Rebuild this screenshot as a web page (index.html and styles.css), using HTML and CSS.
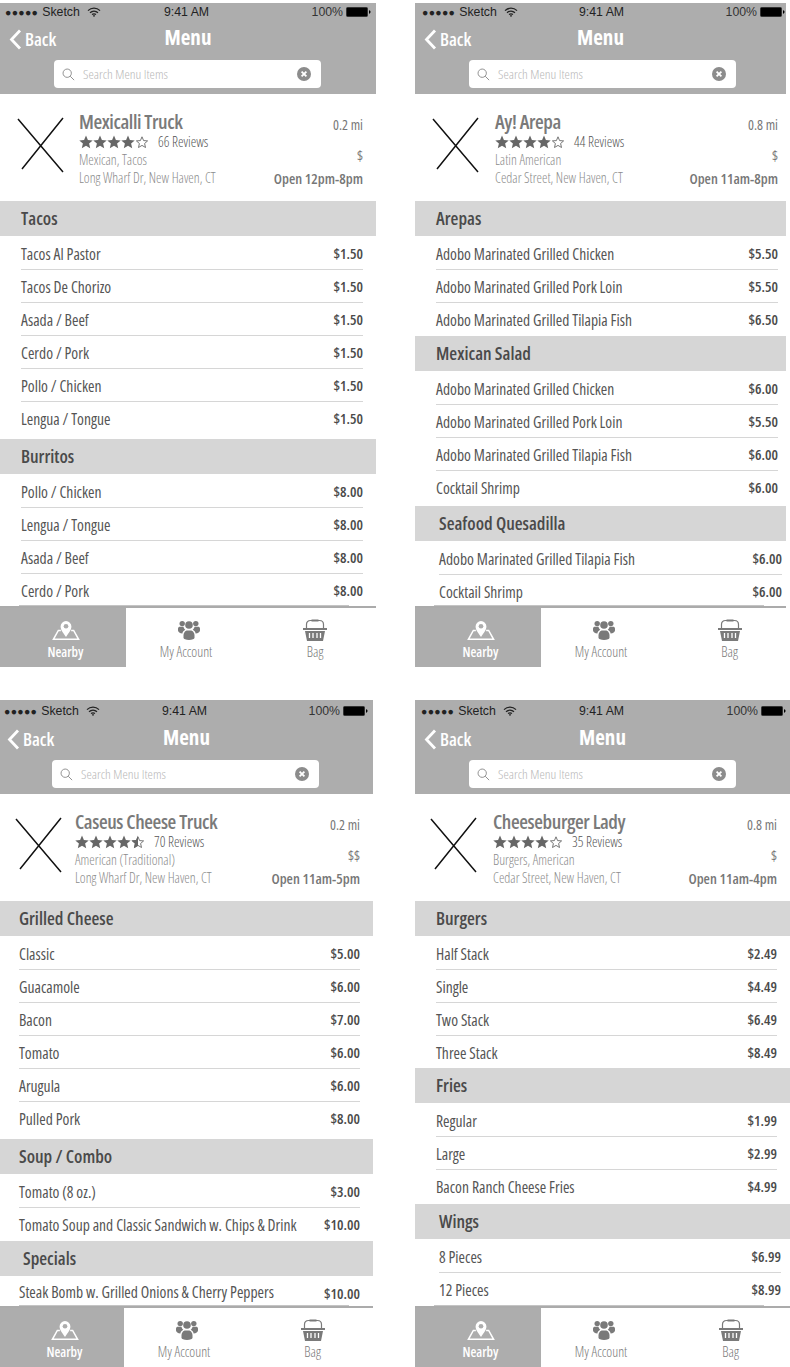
FILE: index.html
```html
<!DOCTYPE html>
<html lang="en">
<head>
    <meta charset="UTF-8">
    <meta name="viewport" content="width=device-width, initial-scale=1.0">
    <title>Menu wireframes</title>
    <link rel="stylesheet" href="styles.css">
</head>
<body>
    <svg class="icon-defs" width="0" height="0" aria-hidden="true">
        <symbol id="i-wifi" viewBox="0 0 14 10">
            <path d="M1 3.6C4.4.4 9.6.4 13 3.6M3 5.7c2.3-2 5.7-2 8 0M5 7.6c1.200-.9 2.800-.9 4 0" fill="none" stroke="currentColor" stroke-width="1.300"/>
            <path d="M7 10 5.800 8.700c.7-.5 1.700-.5 2.400 0z" fill="currentColor"/>
        </symbol>
        <symbol id="i-battery" viewBox="0 0 25 10">
            <rect x=".5" y=".5" width="21" height="9" rx="1" fill="#000" stroke="#333"/>
            <path d="M23 3.300c1 .2 1.500.8 1.500 1.700s-.5 1.500-1.500 1.700z" fill="#000"/>
        </symbol>
        <symbol id="i-back" viewBox="0 0 13 21">
            <path d="M11 1.500 2.500 10.500l8.500 9" fill="none" stroke="currentColor" stroke-width="2.800"/>
        </symbol>
        <symbol id="i-search" viewBox="0 0 15 15">
            <circle cx="6" cy="6" r="4.800" fill="none" stroke="currentColor" stroke-width="1.100"/>
            <path d="m9.500 9.500 4.500 4.500" stroke="currentColor" stroke-width="1.100"/>
        </symbol>
        <symbol id="i-clear" viewBox="0 0 14 14">
            <circle cx="7" cy="7" r="7" fill="#8c8c8c"/>
            <path d="m4.600 4.600 4.800 4.800m0-4.800-4.800 4.800" stroke="#fff" stroke-width="1.800"/>
        </symbol>
        <symbol id="i-cross" viewBox="0 0 48 56">
            <path d="M1 2 46 55M46 1 5 52" fill="none" stroke="#111" stroke-width="1.500"/>
        </symbol>
        <symbol id="i-star" viewBox="0 0 14 14">
            <path d="m7 .6 1.900 4.500 4.800.4-3.600 3.100 1.100 4.700L7 10.800l-4.200 2.500 1.100-4.700L.3 5.500l4.800-.4z" fill="#666"/>
        </symbol>
        <symbol id="i-star-empty" viewBox="0 0 14 14">
            <path d="m7 1.800 1.600 3.800 4 .3-3 2.600.9 4L7 10.400l-3.500 2.100.9-4-3-2.600 4-.3z" fill="none" stroke="#666" stroke-width=".9"/>
        </symbol>
        <symbol id="i-star-half" viewBox="0 0 14 14">
            <path d="m7 1.800 1.600 3.800 4 .3-3 2.600.9 4L7 10.400l-3.500 2.100.9-4-3-2.600 4-.3z" fill="none" stroke="#666" stroke-width=".9"/>
            <path d="m7 .6v10.200l-4.200 2.500 1.100-4.700L.3 5.500l4.800-.4z" fill="#666"/>
        </symbol>
        <symbol id="i-nearby" viewBox="0 0 30 23">
            <path d="M9.500 12H6.800L1.500 21.500h27L23.200 12h-2.700" fill="none" stroke="currentColor" stroke-width="1.600"/>
            <path d="M15 19c-3-4.500-5.800-7.700-5.800-11.300a5.800 5.800 0 0 1 11.600 0C20.800 11.300 18 14.500 15 19z" fill="currentColor"/>
            <circle cx="15" cy="7.500" r="2.500" fill="#adadad"/>
        </symbol>
        <symbol id="i-account" viewBox="0 0 22 20">
            <circle cx="4.200" cy="3.600" r="2.700"/>
            <circle cx="17.800" cy="3.600" r="2.700"/>
            <circle cx="11" cy="5" r="3.800"/>
            <path d="M0 8.800c0-1.500 1-2 2-2h3.500c.3 1.400 1 2.400 1.800 3-1.600.8-2.700 2-2.900 3.700C2 13.500 0 12 0 10.500zM22 8.800c0-1.500-1-2-2-2h-3.500c-.3 1.400-1 2.400-1.800 3 1.600.8 2.700 2 2.900 3.700 2.400 0 4.400-1.500 4.400-3z"/>
            <path d="M5.500 15.500c0-2.800 1.800-5 3.700-5h3.600c1.900 0 3.700 2.200 3.700 5v2.300c0 1.300-2.400 2.200-5.500 2.200s-5.500-.9-5.500-2.200z"/>
        </symbol>
        <symbol id="i-bag" viewBox="0 0 24 22">
            <path d="M3.500 9V5.500C3.500 3 5 1.500 7.500 1.500h9c2.500 0 4 1.500 4 4V9" fill="none" stroke="currentColor" stroke-width="1.200"/>
            <rect x="8.500" y=".5" width="7" height="2" fill="currentColor"/>
            <path d="M0 9h24v2H0zM2 12h20l-2 10H4z" fill="currentColor"/>
            <path d="M6.500 14v5M10 14v5M14 14v5M17.500 14v5" stroke="#fff" stroke-width="1.300"/>
        </symbol>
    </svg>

    <main class="board">
        <section class="phone phone-a">
            <header class="top">
                <div class="status">
                    <span class="status-left"><span class="signal">●●●●●</span> Sketch <svg class="wifi"><use href="#i-wifi"/></svg></span>
                    <span class="status-time">9:41 AM</span>
                    <span class="status-right">100% <svg class="battery"><use href="#i-battery"/></svg></span>
                </div>
                <div class="nav">
                    <a class="back"><svg class="back-icon"><use href="#i-back"/></svg>Back</a>
                    <h1 class="nav-title">Menu</h1>
                </div>
                <div class="search">
                    <svg class="search-icon"><use href="#i-search"/></svg>
                    <span class="search-text">Search Menu Items</span>
                    <svg class="clear-icon"><use href="#i-clear"/></svg>
                </div>
            </header>
            <div class="venue">
                <svg class="thumb"><use href="#i-cross"/></svg>
                <div class="venue-info">
                    <h2 class="venue-name">Mexicalli Truck</h2>
                    <div class="rating">
                        <span class="stars"><svg><use href="#i-star"/></svg><svg><use href="#i-star"/></svg><svg><use href="#i-star"/></svg><svg><use href="#i-star"/></svg><svg><use href="#i-star-empty"/></svg></span>
                        <span>66 Reviews</span>
                    </div>
                    <p class="venue-line">Mexican, Tacos</p>
                    <p class="venue-line">Long Wharf Dr, New Haven, CT</p>
                </div>
                <div class="venue-side">
                    <span>0.2 mi</span>
                    <span>$</span>
                    <strong>Open 12pm-8pm</strong>
                </div>
            </div>
            <div class="menu">
                <h3 class="band">Tacos</h3>
                <ul class="rows">
                    <li class="row"><span>Tacos Al Pastor</span><b>$1.50</b></li>
                    <li class="row"><span>Tacos De Chorizo</span><b>$1.50</b></li>
                    <li class="row"><span>Asada / Beef</span><b>$1.50</b></li>
                    <li class="row"><span>Cerdo / Pork</span><b>$1.50</b></li>
                    <li class="row"><span>Pollo / Chicken</span><b>$1.50</b></li>
                    <li class="row"><span>Lengua / Tongue</span><b>$1.50</b></li>
                </ul>
                <h3 class="band gap-5">Burritos</h3>
                <ul class="rows">
                    <li class="row"><span>Pollo / Chicken</span><b>$8.00</b></li>
                    <li class="row"><span>Lengua / Tongue</span><b>$8.00</b></li>
                    <li class="row"><span>Asada / Beef</span><b>$8.00</b></li>
                    <li class="row"><span>Cerdo / Pork</span><b>$8.00</b></li>
                </ul>
            </div>
            <nav class="tabs">
                <a class="tab tab-active"><svg class="tab-icon nearby"><use href="#i-nearby"/></svg>Nearby</a>
                <a class="tab"><svg class="tab-icon account"><use href="#i-account"/></svg>My Account</a>
                <a class="tab tab-bag"><svg class="tab-icon bag"><use href="#i-bag"/></svg>Bag</a>
            </nav>
        </section>

        <section class="phone phone-b">
            <header class="top">
                <div class="status">
                    <span class="status-left"><span class="signal">●●●●●</span> Sketch <svg class="wifi"><use href="#i-wifi"/></svg></span>
                    <span class="status-time">9:41 AM</span>
                    <span class="status-right">100% <svg class="battery"><use href="#i-battery"/></svg></span>
                </div>
                <div class="nav">
                    <a class="back"><svg class="back-icon"><use href="#i-back"/></svg>Back</a>
                    <h1 class="nav-title">Menu</h1>
                </div>
                <div class="search">
                    <svg class="search-icon"><use href="#i-search"/></svg>
                    <span class="search-text">Search Menu Items</span>
                    <svg class="clear-icon"><use href="#i-clear"/></svg>
                </div>
            </header>
            <div class="venue">
                <svg class="thumb"><use href="#i-cross"/></svg>
                <div class="venue-info">
                    <h2 class="venue-name">Ay! Arepa</h2>
                    <div class="rating">
                        <span class="stars"><svg><use href="#i-star"/></svg><svg><use href="#i-star"/></svg><svg><use href="#i-star"/></svg><svg><use href="#i-star"/></svg><svg><use href="#i-star-empty"/></svg></span>
                        <span>44 Reviews</span>
                    </div>
                    <p class="venue-line">Latin American</p>
                    <p class="venue-line">Cedar Street, New Haven, CT</p>
                </div>
                <div class="venue-side">
                    <span>0.8 mi</span>
                    <span>$</span>
                    <strong>Open 11am-8pm</strong>
                </div>
            </div>
            <div class="menu">
                <h3 class="band">Arepas</h3>
                <ul class="rows">
                    <li class="row"><span>Adobo Marinated Grilled Chicken</span><b>$5.50</b></li>
                    <li class="row"><span>Adobo Marinated Grilled Pork Loin</span><b>$5.50</b></li>
                    <li class="row"><span>Adobo Marinated Grilled Tilapia Fish</span><b>$6.50</b></li>
                </ul>
                <h3 class="band gap-1">Mexican Salad</h3>
                <ul class="rows">
                    <li class="row"><span>Adobo Marinated Grilled Chicken</span><b>$6.00</b></li>
                    <li class="row"><span>Adobo Marinated Grilled Pork Loin</span><b>$5.50</b></li>
                    <li class="row"><span>Adobo Marinated Grilled Tilapia Fish</span><b>$6.00</b></li>
                    <li class="row"><span>Cocktail Shrimp</span><b>$6.00</b></li>
                </ul>
                <div class="shifted">
                    <h3 class="band gap-3">Seafood Quesadilla</h3>
                    <ul class="rows">
                        <li class="row"><span>Adobo Marinated Grilled Tilapia Fish</span><b>$6.00</b></li>
                        <li class="row"><span>Cocktail Shrimp</span><b>$6.00</b></li>
                    </ul>
                </div>
            </div>
            <nav class="tabs">
                <a class="tab tab-active"><svg class="tab-icon nearby"><use href="#i-nearby"/></svg>Nearby</a>
                <a class="tab"><svg class="tab-icon account"><use href="#i-account"/></svg>My Account</a>
                <a class="tab tab-bag"><svg class="tab-icon bag"><use href="#i-bag"/></svg>Bag</a>
            </nav>
        </section>

        <section class="phone phone-c">
            <header class="top">
                <div class="status">
                    <span class="status-left"><span class="signal">●●●●●</span> Sketch <svg class="wifi"><use href="#i-wifi"/></svg></span>
                    <span class="status-time">9:41 AM</span>
                    <span class="status-right">100% <svg class="battery"><use href="#i-battery"/></svg></span>
                </div>
                <div class="nav">
                    <a class="back"><svg class="back-icon"><use href="#i-back"/></svg>Back</a>
                    <h1 class="nav-title">Menu</h1>
                </div>
                <div class="search">
                    <svg class="search-icon"><use href="#i-search"/></svg>
                    <span class="search-text">Search Menu Items</span>
                    <svg class="clear-icon"><use href="#i-clear"/></svg>
                </div>
            </header>
            <div class="venue">
                <svg class="thumb"><use href="#i-cross"/></svg>
                <div class="venue-info">
                    <h2 class="venue-name">Caseus Cheese Truck</h2>
                    <div class="rating">
                        <span class="stars"><svg><use href="#i-star"/></svg><svg><use href="#i-star"/></svg><svg><use href="#i-star"/></svg><svg><use href="#i-star"/></svg><svg><use href="#i-star-half"/></svg></span>
                        <span>70 Reviews</span>
                    </div>
                    <p class="venue-line">American (Traditional)</p>
                    <p class="venue-line">Long Wharf Dr, New Haven, CT</p>
                </div>
                <div class="venue-side">
                    <span>0.2 mi</span>
                    <span>$$</span>
                    <strong>Open 11am-5pm</strong>
                </div>
            </div>
            <div class="menu">
                <h3 class="band">Grilled Cheese</h3>
                <ul class="rows">
                    <li class="row"><span>Classic</span><b>$5.00</b></li>
                    <li class="row"><span>Guacamole</span><b>$6.00</b></li>
                    <li class="row"><span>Bacon</span><b>$7.00</b></li>
                    <li class="row"><span>Tomato</span><b>$6.00</b></li>
                    <li class="row"><span>Arugula</span><b>$6.00</b></li>
                    <li class="row"><span>Pulled Pork</span><b>$8.00</b></li>
                </ul>
                <h3 class="band gap-5">Soup / Combo</h3>
                <ul class="rows">
                    <li class="row"><span>Tomato (8 oz.)</span><b>$3.00</b></li>
                    <li class="row"><span>Tomato Soup and Classic Sandwich w. Chips &amp; Drink</span><b>$10.00</b></li>
                </ul>
                <h3 class="band gap-1 band-indent">Specials</h3>
                <ul class="rows">
                    <li class="row row-raised"><span>Steak Bomb w. Grilled Onions &amp; Cherry Peppers</span><b>$10.00</b></li>
                </ul>
            </div>
            <nav class="tabs">
                <a class="tab tab-active"><svg class="tab-icon nearby"><use href="#i-nearby"/></svg>Nearby</a>
                <a class="tab"><svg class="tab-icon account"><use href="#i-account"/></svg>My Account</a>
                <a class="tab tab-bag"><svg class="tab-icon bag"><use href="#i-bag"/></svg>Bag</a>
            </nav>
        </section>

        <section class="phone phone-d">
            <header class="top">
                <div class="status">
                    <span class="status-left"><span class="signal">●●●●●</span> Sketch <svg class="wifi"><use href="#i-wifi"/></svg></span>
                    <span class="status-time">9:41 AM</span>
                    <span class="status-right">100% <svg class="battery"><use href="#i-battery"/></svg></span>
                </div>
                <div class="nav">
                    <a class="back"><svg class="back-icon"><use href="#i-back"/></svg>Back</a>
                    <h1 class="nav-title">Menu</h1>
                </div>
                <div class="search">
                    <svg class="search-icon"><use href="#i-search"/></svg>
                    <span class="search-text">Search Menu Items</span>
                    <svg class="clear-icon"><use href="#i-clear"/></svg>
                </div>
            </header>
            <div class="venue">
                <svg class="thumb"><use href="#i-cross"/></svg>
                <div class="venue-info">
                    <h2 class="venue-name">Cheeseburger Lady</h2>
                    <div class="rating">
                        <span class="stars"><svg><use href="#i-star"/></svg><svg><use href="#i-star"/></svg><svg><use href="#i-star"/></svg><svg><use href="#i-star"/></svg><svg><use href="#i-star-empty"/></svg></span>
                        <span>35 Reviews</span>
                    </div>
                    <p class="venue-line">Burgers, American</p>
                    <p class="venue-line">Cedar Street, New Haven, CT</p>
                </div>
                <div class="venue-side">
                    <span>0.8 mi</span>
                    <span>$</span>
                    <strong>Open 11am-4pm</strong>
                </div>
            </div>
            <div class="menu">
                <h3 class="band">Burgers</h3>
                <ul class="rows">
                    <li class="row"><span>Half Stack</span><b>$2.49</b></li>
                    <li class="row"><span>Single</span><b>$4.49</b></li>
                    <li class="row"><span>Two Stack</span><b>$6.49</b></li>
                    <li class="row"><span>Three Stack</span><b>$8.49</b></li>
                </ul>
                <h3 class="band">Fries</h3>
                <ul class="rows">
                    <li class="row"><span>Regular</span><b>$1.99</b></li>
                    <li class="row"><span>Large</span><b>$2.99</b></li>
                    <li class="row"><span>Bacon Ranch Cheese Fries</span><b>$4.99</b></li>
                </ul>
                <div class="shifted">
                    <h3 class="band gap-2">Wings</h3>
                    <ul class="rows">
                        <li class="row"><span>8 Pieces</span><b>$6.99</b></li>
                        <li class="row"><span>12 Pieces</span><b>$8.99</b></li>
                    </ul>
                </div>
            </div>
            <nav class="tabs">
                <a class="tab tab-active"><svg class="tab-icon nearby"><use href="#i-nearby"/></svg>Nearby</a>
                <a class="tab"><svg class="tab-icon account"><use href="#i-account"/></svg>My Account</a>
                <a class="tab tab-bag"><svg class="tab-icon bag"><use href="#i-bag"/></svg>Bag</a>
            </nav>
        </section>
    </main>
</body>
</html>
```

FILE: styles.css
```css
* {
    box-sizing: border-box;
}
body {
    margin: 0;
    background: #fff;
    font-family: "Open Sans", "Liberation Sans", sans-serif;
    font-stretch: 75%;
    color: #4a4a4a;
}
h1, h2, h3, p, ul {
    margin: 0;
    padding: 0;
}
ul {
    list-style: none;
}
.icon-defs {
    position: absolute;
}
.board {
    display: grid;
    grid-template-columns: 415px 375px;
    grid-template-rows: 667px 667px;
    row-gap: 33px;
}

/* each screen is a little different in the mockup */
.phone {
    display: flex;
    flex-direction: column;
    height: 667px;
    overflow: hidden;
    --pad-left: 21px;
    --pad-right: 13px;
    --search-left: 54px;
    --thumb-left: 17px;
    --info-left: 79px;
    --status-left: 5px;
    --status-right: 5px;
    --time-left: 164px;
    --back-left: 9px;
    --bag-shift: 8px;
    --line-left: 19px;
}
.phone-a, .phone-b {
    padding-top: 3px;
}
.phone-a .status, .phone-b .status {
    height: 17px;
    margin-bottom: 2px;
}
.phone-a {
    width: 376px;
}
.phone-b {
    width: 371px;
    --pad-right: 8px;
    --info-left: 80px;
    --status-left: 7px;
    --status-right: 1px;
    --bag-shift: 12px;
}
.phone-c {
    width: 373px;
    --pad-left: 19px;
    --search-left: 52px;
    --thumb-left: 15px;
    --info-left: 75px;
    --status-left: 4px;
    --status-right: 5px;
    --time-left: 162px;
    --back-left: 7px;
}
.phone-d {
    width: 375px;
    --thumb-left: 15px;
    --info-left: 78px;
    --status-left: 6px;
    --status-right: 4px;
    --bag-shift: 10px;
}

.top {
    flex: none;
    background: #adadad;
    color: #fff;
}
.status {
    position: relative;
    height: 22px;
    padding: 0 var(--status-right) 0 var(--status-left);
    display: flex;
    align-items: center;
    justify-content: space-between;
    font-family: "Liberation Sans", sans-serif;
    font-stretch: normal;
    font-size: 12.3px;
    color: #222;
}
.status-left {
    display: flex;
    align-items: center;
    gap: 4px;
}
.signal {
    font-size: 10.5px;
    line-height: 12px;
    letter-spacing: 0.3px;
}
.wifi {
    width: 14px;
    height: 10px;
    margin-left: 3px;
}
.status-time {
    position: absolute;
    left: var(--time-left);
}
.status-right {
    display: flex;
    align-items: center;
    gap: 3px;
    color: #333;
}
.battery {
    width: 25px;
    height: 10px;
}
.nav {
    position: relative;
    height: 36px;
    display: flex;
    justify-content: center;
}
.back {
    position: absolute;
    left: var(--back-left);
    top: 5px;
    display: flex;
    align-items: center;
    gap: 3px;
    font-size: 18px;
    font-weight: 600;
}
.back-icon {
    width: 13px;
    height: 21px;
}
.nav-title {
    font-size: 21px;
    font-weight: 700;
    line-height: 26px;
    margin-top: 2px;
}
.search {
    display: flex;
    align-items: center;
    width: 267px;
    height: 28px;
    margin: 2px 0 6px var(--search-left);
    padding: 0 10px 0 8px;
    background: #fff;
    border-radius: 4px;
    color: #b8b8b8;
    font-size: 13.5px;
}
.search-icon {
    width: 13px;
    height: 13px;
    color: #8c8c8c;
    margin-right: 8px;
}
.search-text {
    flex: 1;
    font-weight: 300;
}
.clear-icon {
    width: 14px;
    height: 14px;
}

.venue {
    flex: none;
    display: flex;
    height: 107px;
    padding: 0 var(--pad-right) 0 var(--thumb-left);
}
.thumb {
    flex: none;
    width: 48px;
    height: 56px;
    margin-top: 23px;
}
.venue-info {
    padding: 17px 0 0 calc(var(--info-left) - var(--thumb-left) - 48px);
    flex: 1;
    color: #8c8c8c;
    font-size: 13.8px;
    font-weight: 300;
}
.venue-name {
    font-size: 20px;
    font-weight: 600;
    line-height: 22px;
    letter-spacing: -0.4px;
    color: #7a7a7a;
    white-space: nowrap;
}
.rating {
    display: flex;
    align-items: center;
    gap: 9px;
    height: 18px;
    line-height: 18px;
    font-size: 14px;
    color: #555;
}
.stars {
    display: flex;
}
.stars svg {
    width: 14px;
    height: 14px;
}
.venue-line {
    line-height: 18px;
    white-space: nowrap;
}
.venue-side {
    flex: none;
    display: flex;
    flex-direction: column;
    align-items: flex-end;
    padding-top: 22px;
    font-size: 14px;
    color: #777;
}
.venue-side span {
    height: 31px;
    line-height: 18px;
}
.venue-side strong {
    font-size: 14.5px;
    font-weight: 600;
    line-height: 18px;
    margin-top: -8px;
}

.menu {
    flex: 1;
    min-height: 0;
    overflow: hidden;
    font-size: 15.6px;
    color: #555;
}
.band {
    height: 35px;
    line-height: 35px;
    padding-left: var(--pad-left);
    background: #d6d6d6;
    font-size: 18px;
    font-weight: 600;
    color: #4a4a4a;
}
.gap-1 { margin-top: 1px; }
.gap-2 { margin-top: 2px; }
.gap-3 { margin-top: 3px; }
.gap-5 { margin-top: 5px; }
.band-indent { padding-left: 23px; }
.rows {
    padding: 1px var(--pad-right) 0 var(--pad-left);
}
.row {
    display: flex;
    justify-content: space-between;
    align-items: center;
    height: 33px;
    padding-top: 1px;
    border-bottom: 1px solid #d6d6d6;
    white-space: nowrap;
}
.row:last-child {
    height: 32px;
    border-bottom: 0;
}
.row-raised span {
    margin-top: -4px;
}
.row b {
    font-weight: 600;
    font-size: 14.5px;
    color: #4a4a4a;
}
.shifted {
    --pad-left: 24px;
    --pad-right: 4px;
}
.phone-d .shifted {
    --pad-right: 9px;
}

.tabs {
    position: relative;
    flex: none;
    display: grid;
    grid-template-columns: 126px 120px 1fr;
    height: 61px;
    border-top: 2px solid #ababab;
    background: #fff;
    color: #7a7a7a;
    font-size: 14px;
    font-weight: 300;
}
/* stray divider of the row that runs under the tab bar */
.tabs::before {
    content: "";
    position: absolute;
    left: var(--line-left);
    top: -3px;
    width: 330px;
    height: 1px;
    background: #c4c4c4;
}
.phone-c .tabs {
    grid-template-columns: 124px 120px 1fr;
}
.tab {
    display: flex;
    flex-direction: column;
    align-items: center;
    height: 59px;
    padding-top: 11px;
    line-height: 18px;
}
.tab-active {
    padding-left: 5px;
    background: #adadad;
    color: #fff;
    font-size: 13.5px;
    font-weight: 600;
}
.tab-bag {
    padding-left: var(--bag-shift);
}
.tab-icon {
    height: 22px;
    margin-bottom: 2px;
}
.nearby {
    width: 28px;
}
.account {
    width: 22px;
    margin-left: 5px;
    fill: #7a7a7a;
}
.bag {
    width: 24px;
}
```
